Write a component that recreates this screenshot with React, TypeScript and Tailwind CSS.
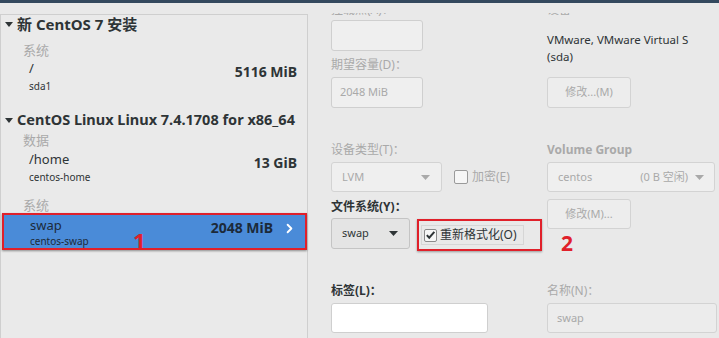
import { ChevronRight } from "lucide-react";

const gray = "text-[#a9a9a9]";
const dark = "text-[#2e3436]";

function Caret({ color = "#a9a9a9" }: { color?: string }) {
    return (
        <svg width="9" height="5" viewBox="0 0 9 5">
            <path d="M0 0h9L4.5 5z" fill={color} />
        </svg>
    );
}

function Tri() {
    return (
        <svg width="8" height="5" viewBox="0 0 8 5" className="mr-[4px]">
            <path d="M0 0h8L4 5z" fill="#2e3436" />
        </svg>
    );
}

function Check() {
    return (
        <svg width="12" height="12" viewBox="0 0 12 12">
            <path d="M2 6.2l2.6 2.8L10.2 2.6" fill="none" stroke="#2e3436" strokeWidth="2.2" />
        </svg>
    );
}

export default function App() {
    return (
        <div className="w-[719px] h-[338px] overflow-hidden bg-[#e9e9e9] border-t-[3px] border-[#34495e] flex font-['Noto_Sans','Noto_Sans_CJK_SC',sans-serif]">
            {/* Left: partition tree */}
            <div className="w-[308px] shrink-0 mt-[11px] border-t border-r border-l border-[#cfcfcf] bg-[#eaeaea] relative">
                <div className={`flex items-center pl-[4px] h-[18px] text-[15px] font-bold ${dark}`}>
                    <Tri />
                    <span>新 CentOS 7 安装</span>
                </div>
                <div className={`mt-[9px] pl-[22px] leading-[16px] text-[13px] ${gray}`}>系统</div>
                <div className="mt-[2px] pl-[28px] pr-[10px] flex justify-between items-start">
                    <div>
                        <div className={`leading-[16px] text-[13px] ${dark}`}>/</div>
                        <div className={`mt-[3px] leading-[14px] text-[10px] ${dark}`}>sda1</div>
                    </div>
                    <div className={`pt-[3px] leading-[18px] text-[14px] font-bold ${dark}`}>5116 MiB</div>
                </div>

                <div className={`mt-[18px] flex items-center pl-[4px] h-[18px] text-[14.5px] font-bold ${dark}`}>
                    <Tri />
                    <span>CentOS Linux Linux 7.4.1708 for x86_64</span>
                </div>
                <div className={`mt-[3px] pl-[22px] leading-[16px] text-[13px] ${gray}`}>数据</div>
                <div className="mt-[3px] pl-[28px] pr-[10px] flex justify-between items-start">
                    <div>
                        <div className={`leading-[16px] text-[13px] ${dark}`}>/home</div>
                        <div className={`mt-[3px] leading-[14px] text-[10px] ${dark}`}>centos-home</div>
                    </div>
                    <div className={`pt-[3px] leading-[18px] text-[14px] font-bold ${dark}`}>13 GiB</div>
                </div>
                <div className={`mt-[13px] pl-[22px] leading-[16px] text-[13px] ${gray}`}>系统</div>

                {/* selected row */}
                <div className="ml-[1px] w-[305px] border-2 border-[#e0202a] shadow-[0_1px_2px_rgba(0,0,0,0.4)]">
                    <div className="bg-[#4a8bd8] h-[33px] pl-[26px] pr-[8px] flex justify-between items-start">
                        <div className="pt-[2px]">
                            <div className="leading-[16px] text-[13px] text-[#1c2a3a]">swap</div>
                            <div className="mt-[1px] leading-[14px] text-[10px] text-[#1c2a3a]">centos-swap</div>
                        </div>
                        <div className="pt-[4px] flex items-center gap-[9px]">
                            <span className="leading-[18px] text-[14px] font-bold text-[#1c2a3a]">2048 MiB</span>
                            <ChevronRight size={15} strokeWidth={3} className="text-white" />
                        </div>
                    </div>
                </div>
                <span className="absolute left-[132px] top-[212px] text-[22px] leading-[26px] font-bold text-[#e0202a]">1</span>
            </div>

            {/* Right: details */}
            <div className="flex-1 pl-[23px] flex flex-col">
                <div className="mt-[10px] h-[6px] overflow-hidden flex text-[12px] leading-[16px]">
                    <span className={`-mt-[11px] w-[216px] ${gray}`}>挂载点(A)：· · · · · · · · · · · · · ·</span>
                    <span className={`-mt-[11px] ${gray}`}>设备 · · · · · · · · · · · · · · · · · · ·</span>
                </div>
                <div className="flex">
                    {/* column 1 */}
                    <div className="w-[216px] shrink-0 flex flex-col">
                        <div className="mt-[1px] w-[92px] h-[31px] rounded-[3px] border border-[#cfcfcf] bg-[#efefef]" />
                        <div className={`mt-[7px] leading-[14px] text-[12px] ${gray}`}>期望容量(D)：</div>
                        <div className={`mt-[5px] w-[92px] h-[31px] rounded-[3px] border border-[#cfcfcf] bg-[#efefef] flex items-center pl-[8px] text-[11px] ${gray}`}>
                            2048 MiB
                        </div>
                        <div className={`mt-[35px] leading-[14px] text-[12px] ${gray}`}>设备类型(T)：</div>
                        <div className="mt-[5px] flex items-center">
                            <div className={`w-[111px] h-[30px] rounded-[3px] border border-[#d3d3d3] bg-[#efefef] flex items-center justify-between pl-[10px] pr-[11px] text-[11px] ${gray}`}>
                                <span>LVM</span>
                                <Caret />
                            </div>
                            <div className="ml-[12px] flex items-center gap-[4px]">
                                <div className="w-[14px] h-[14px] rounded-[2px] border border-[#9a9a9a] bg-[#f6f6f6]" />
                                <span className={`text-[12px] ${gray}`}>加密(E)</span>
                            </div>
                        </div>
                        <div className={`mt-[8px] leading-[14px] text-[12px] font-bold ${dark}`}>文件系统(Y)：</div>
                        <div className="mt-[4px] flex items-start h-[33px]">
                            <div className={`w-[79px] h-[31px] rounded-[3px] border border-[#c4c4c4] bg-[#e4e4e4] flex items-center justify-between pl-[10px] pr-[11px] text-[11px] ${dark}`}>
                                <span>swap</span>
                                <Caret color="#2e3436" />
                            </div>
                            <div className="ml-[7px] mt-[1px] w-[125px] h-[32px] border-2 border-[#e0202a] flex items-center pl-[2px] shadow-[0_1px_2px_rgba(0,0,0,0.35)]">
                                <div className={`w-[103px] h-[20px] border border-[#d6d6d6] flex items-center pl-[2px] gap-[3px] text-[12px] ${dark}`}>
                                    <div className="w-[13px] h-[13px] rounded-[2px] border border-[#8a8a8a] bg-[#f6f6f6] flex items-center justify-center">
                                        <Check />
                                    </div>
                                    <span>重新格式化(O)</span>
                                </div>
                            </div>
                        </div>
                        <div className={`mt-[33px] leading-[14px] text-[12px] font-bold ${dark}`}>标签(L)：</div>
                        <div className="mt-[5px] w-[157px] h-[30px] rounded-[3px] border border-[#cfcfcf] bg-white" />
                    </div>

                    {/* column 2 */}
                    <div className="flex-1 flex flex-col relative">
                        <div className={`mt-[12px] leading-[17px] text-[11.5px] ${dark}`}>
                            <div>VMware, VMware Virtual S</div>
                            <div>(sda)</div>
                        </div>
                        <div className={`mt-[12px] w-[84px] h-[31px] rounded-[3px] border border-[#d3d3d3] bg-[#ededed] flex items-center justify-center text-[11px] ${gray}`}>
                            修改...(M)
                        </div>
                        <div className={`mt-[35px] leading-[14px] text-[12px] font-bold ${gray}`}>Volume Group</div>
                        <div className={`mt-[5px] w-[168px] h-[30px] rounded-[3px] border border-[#d3d3d3] bg-[#efefef] flex items-center pl-[10px] pr-[10px] text-[11px] ${gray}`}>
                            <span className="flex-1">centos</span>
                            <span className="mr-[7px]">(0 B 空闲)</span>
                            <Caret />
                        </div>
                        <div className={`mt-[7px] w-[84px] h-[30px] rounded-[3px] border border-[#d3d3d3] bg-[#ededed] flex items-center justify-center text-[11px] ${gray}`}>
                            修改(M)...
                        </div>
                        <div className={`mt-[55px] leading-[14px] text-[12px] ${gray}`}>名称(N)：</div>
                        <div className={`mt-[5px] w-[170px] h-[30px] rounded-[3px] border border-[#d3d3d3] bg-[#ececec] flex items-center pl-[9px] text-[11px] ${gray}`}>
                            swap
                        </div>
                        <span className="absolute left-[14px] top-[212px] text-[21px] leading-[24px] font-bold text-[#e0202a]">2</span>
                    </div>
                </div>
            </div>
        </div>
    );
}
